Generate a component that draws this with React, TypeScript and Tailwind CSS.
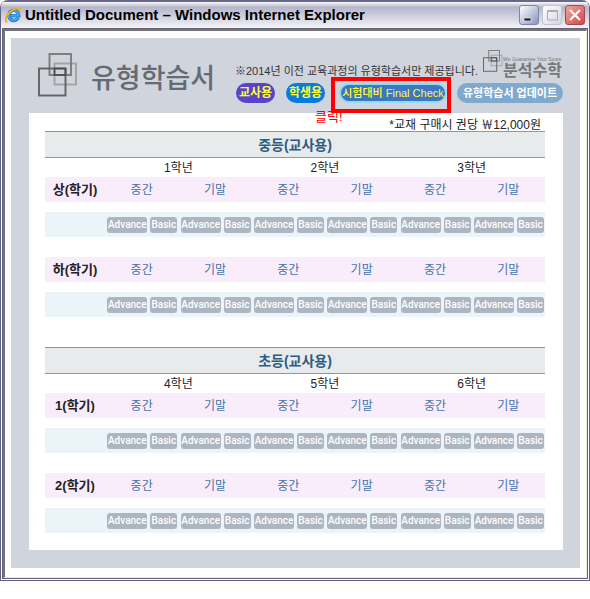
import type { ReactNode } from 'react'

interface Section {
  title: string
  grades: string[]
  terms: string[]
}

const sections: Section[] = [
  { title: '중등(교사용)', grades: ['1학년', '2학년', '3학년'], terms: ['상(학기)', '하(학기)'] },
  { title: '초등(교사용)', grades: ['4학년', '5학년', '6학년'], terms: ['1(학기)', '2(학기)'] },
]

const exams = ['중간', '기말']
const levels = ['Advance', 'Basic']

function ExplorerIcon() {
  return (
    <svg width="16" height="16" viewBox="0 0 16 16" className="shrink-0" aria-hidden="true">
      <path d="M13.3 10.6A5 5 0 1 1 13.8 8.600H5.500" fill="none" stroke="#1668b8" strokeWidth="3.400" />
      <path d="M13.1 10.500A5 5 0 1 1 13.600 8.600H5.500" fill="none" stroke="#3fa8f0" strokeWidth="2.200" />
      <path d="M6.400 6.900h4.600c-.5-2.200-4-2.200-4.600 0z" fill="#f4f8fd" />
      <path d="M2.400 15C-.6 14.400.4 10 4 6 8 1.900 13.600-.3 14.700 1.400c.4.8.1 1.900-.4 2.900" fill="none" stroke="#f4ae24" strokeWidth="1.900" />
    </svg>
  )
}

function Squares({ className }: { className: string }) {
  return (
    <svg viewBox="0 0 40 44" className={className} fill="none" aria-hidden="true">
      <rect x="16.500" y="10.500" width="21.500" height="21" stroke="#a3a3a5" strokeWidth="1.900" />
      <rect x="11.500" y="1" width="21.500" height="21" stroke="#7d7c7b" strokeWidth="1.900" />
      <rect x="1" y="15.500" width="26.500" height="27" stroke="#63625f" strokeWidth="1.900" />
      <path d="M16.500 22V15.500H27.500V22Z" stroke="#4b4a48" strokeWidth="1.700" />
    </svg>
  )
}

function Pill({ className, children }: { className: string; children: ReactNode }) {
  return (
    <button
      type="button"
      className={`flex h-5 items-center justify-center rounded-full leading-4 whitespace-nowrap ${className}`}
    >
      {children}
    </button>
  )
}

function TitleBar() {
  return (
    <header className="flex h-7 items-center gap-1 border-t-2 border-[#68678c] bg-linear-to-b from-[#fafafd] via-[#b5b5cb] via-20% to-[#f4f4f8] pr-1 pl-1">
      <ExplorerIcon />
      <h1 className="flex-1 truncate font-[Liberation_Sans,sans-serif] text-[15px] leading-5 font-bold text-black">
        Untitled Document – Windows Internet Explorer
      </h1>
      <div className="flex gap-[3px]">
        <button type="button" aria-label="Minimize" className="h-5 w-5 rounded-[3px] border border-[#7d86ad] bg-linear-to-br from-white to-[#8b94bb]">
          <svg viewBox="0 0 18 18" aria-hidden="true">
            <rect x="4" y="12" width="7" height="3" fill="#23233f" stroke="#fff" strokeWidth=".6" />
          </svg>
        </button>
        <button type="button" aria-label="Maximize" disabled className="h-5 w-5 rounded-[3px] border border-[#c3c3d2] bg-linear-to-br from-white to-[#d5d5e0]">
          <svg viewBox="0 0 18 18" fill="none" aria-hidden="true">
            <path d="M4.500 4.500h10v9.500h-10z M4 5.500h10.500" stroke="#aaaab8" />
          </svg>
        </button>
        <button type="button" aria-label="Close" className="h-5 w-5 rounded-[3px] border border-[#a8464e] bg-linear-to-br from-[#f0a49a] to-[#cc4750]">
          <svg viewBox="0 0 18 18" aria-hidden="true">
            <path d="M4 4l10 10M14 4L4 14" stroke="#fff" strokeWidth="2.200" />
          </svg>
        </button>
      </div>
    </header>
  )
}

function Banner() {
  return (
    <div className="flex h-[75px] pt-3 pl-[27px]">
      <div className="flex w-[197px] shrink-0 gap-[13px] pt-[3px]">
        <Squares className="h-[44px] w-[40px] shrink-0" />
        <h2 className="pt-2 text-[27px] leading-9 font-medium whitespace-nowrap text-[#666a72]">유형학습서</h2>
      </div>

      <div className="flex-1 pr-4">
        <div className="flex h-[33px] justify-between">
          <p className="pt-[13px] text-[11px] leading-4 whitespace-nowrap text-[#303238]">
            ※2014년 이전 교육과정의 유형학습서만 제공됩니다.
          </p>
          <div className="flex pr-0.5">
            <Squares className="h-[22px] w-[20px] shrink-0" />
            <div className="text-[#77777a]">
              <p className="pt-1.5 font-[Liberation_Sans,sans-serif] text-[5px] leading-[6px] whitespace-nowrap">We Guarantee Your Score</p>
              <p className="text-base leading-[18px] font-bold whitespace-nowrap">분석수학</p>
            </div>
          </div>
        </div>

        <div className="flex items-center">
          <Pill className="ml-px w-[39px] bg-[#5a43c6] text-xs font-bold text-[#ffff30]">교사용</Pill>
          <Pill className="ml-[11px] w-[39px] bg-[#0a7ae0] text-xs font-bold text-[#ffff30]">학생용</Pill>
          <div className="relative ml-[14px]">
            <Pill className="w-[108px] border-2 border-[#8ddcf8] bg-[#3f76c0] text-[11px] font-medium text-[#ffff30]">
              시험대비 Final Check
            </Pill>
            <span className="absolute -top-1.5 -left-2 h-9 w-[120px] border-4 border-[#ff0000]" />
            <span className="absolute top-[26px] -left-6 text-[13px] leading-4 whitespace-nowrap text-[#ff0000]">클릭!</span>
          </div>
          <Pill className="ml-[10px] w-[106px] bg-[#7fa9cd] text-[11px] font-bold text-white">유형학습서 업데이트</Pill>
        </div>
      </div>
    </div>
  )
}

function SectionTable({ section }: { section: Section }) {
  return (
    <table className="w-full table-fixed border-separate border-spacing-0 text-center text-xs">
      <colgroup>
        <col className="w-[60px]" />
        {section.grades.map((grade) => (
          <col key={grade} span={2} />
        ))}
      </colgroup>
      <thead>
        <tr className="h-[27px]">
          <th colSpan={7} className="border-y border-[#6ba3bf] bg-[#e7ebeb] p-0 text-sm leading-4 text-[#2c5c85]">
            {section.title}
          </th>
        </tr>
        <tr className="h-[19px]">
          <td className="p-0" />
          {section.grades.map((grade) => (
            <th key={grade} colSpan={2} className="p-0 leading-4 font-normal text-[#222222]">
              {grade}
            </th>
          ))}
        </tr>
      </thead>
      {section.terms.map((term, i) => (
        <tbody key={term}>
          {i > 0 && (
            <tr className="h-5">
              <td colSpan={7} className="p-0" />
            </tr>
          )}
          <tr className="h-[25px] bg-[#f9ecfb]">
            <th className="p-0 text-[13px] leading-4 whitespace-nowrap text-[#222222]">{term}</th>
            {section.grades.map((grade) =>
              exams.map((exam) => (
                <td key={grade + exam} className="p-0 leading-4">
                  <a href="#" className="text-[#4374a8]">{exam}</a>
                </td>
              ))
            )}
          </tr>
          <tr className="h-2.5">
            <td colSpan={7} className="p-0" />
          </tr>
          <tr className="h-[25px] bg-[#ebf4f8]">
            <td className="p-0" />
            {section.grades.map((grade) =>
              exams.map((exam) => (
                <td key={grade + exam} className="p-0">
                  <div className="flex justify-end gap-[3px] pr-px">
                    {levels.map((level) => (
                      <button
                        key={level}
                        type="button"
                        className={`h-4 rounded-[3px] bg-[#adb5c0] font-[Roboto,sans-serif] text-[10px] leading-4 font-medium text-white ${
                          level === 'Advance' ? 'w-10' : 'w-[27px]'
                        }`}
                      >
                        {level}
                      </button>
                    ))}
                  </div>
                </td>
              ))
            )}
          </tr>
        </tbody>
      ))}
    </table>
  )
}

export default function App() {
  return (
    <div className="bg-white pb-4 font-[Liberation_Sans,Noto_Sans_CJK_KR,sans-serif]">
      <div className="overflow-hidden rounded-t-lg border-x border-b border-[#62617f]">
        <TitleBar />
        <div className="border-x border-b border-white bg-white">
          <div className="border border-[#62617f]">
            <div className="border-t-2 border-r border-b border-l-2 border-t-[#77766e] border-r-[#f0eee3] border-b-[#f0eee3] border-l-[#77766e]">
              <main className="bg-white pt-[7px] pr-1.5 pb-[9px] pl-1.5">
                <div className="bg-[#d0d4dc] pb-[18px]">
                  <Banner />
                  <div className="mr-[17px] ml-[18px] bg-white pr-[18px] pb-[17px] pl-4">
                    <p className="h-[18px] pt-1 pr-1 text-right text-xs leading-4 text-[#222222]">
                      *교재 구매시 권당 ￦12,000원
                    </p>
                    <div className="flex flex-col gap-[30px]">
                      {sections.map((section) => (
                        <SectionTable key={section.title} section={section} />
                      ))}
                    </div>
                  </div>
                </div>
              </main>
            </div>
          </div>
        </div>
      </div>
    </div>
  )
}
